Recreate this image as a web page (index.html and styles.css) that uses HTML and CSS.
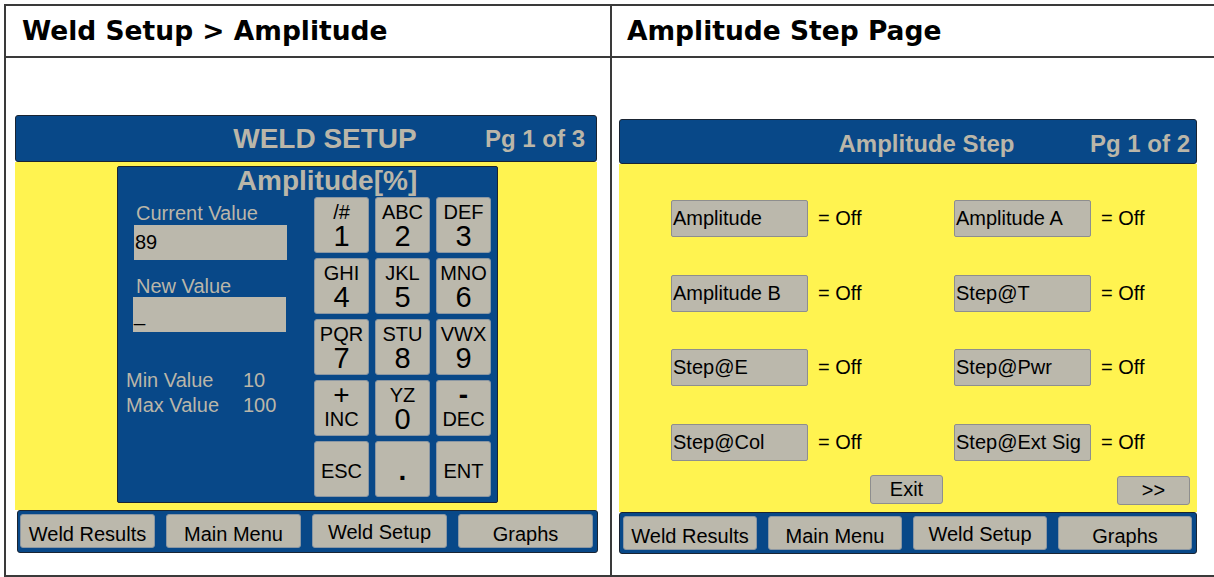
FILE: index.html
```html
<!DOCTYPE html>
<html>
<head>
<meta charset="utf-8">
<link rel="stylesheet" href="styles.css">
</head>
<body>
<div class="sheet">
  <div class="cell head head-left">Weld Setup &gt; Amplitude</div>
  <div class="cell head head-right">Amplitude Step Page</div>

  <div class="cell body body-left">
    <div class="panel panel-left">
      <div class="titlebar tb-left">
        <span class="tb-title tb-title-left">WELD SETUP</span>
        <span class="tb-pg tb-pg-left">Pg 1 of 3</span>
      </div>
      <div class="yellow y-left">
        <div class="dialog">
          <div class="dlg-title">Amplitude[%]</div>
          <div class="dlg-main">
            <div class="dlg-side">
              <div class="lbl">Current Value</div>
              <div class="inp">89</div>
              <div class="lbl lbl2">New Value</div>
              <div class="inp inp2">_</div>
              <div class="limits">
                <span>Min Value</span><span>10</span>
                <span>Max Value</span><span>100</span>
              </div>
            </div>
            <div class="keypad">
              <div class="key"><span class="k-top">/#</span><span class="k-num">1</span></div>
              <div class="key"><span class="k-top">ABC</span><span class="k-num">2</span></div>
              <div class="key"><span class="k-top">DEF</span><span class="k-num">3</span></div>
              <div class="key"><span class="k-top">GHI</span><span class="k-num">4</span></div>
              <div class="key"><span class="k-top">JKL</span><span class="k-num">5</span></div>
              <div class="key"><span class="k-top">MNO</span><span class="k-num">6</span></div>
              <div class="key"><span class="k-top">PQR</span><span class="k-num">7</span></div>
              <div class="key"><span class="k-top">STU</span><span class="k-num">8</span></div>
              <div class="key"><span class="k-top">VWX</span><span class="k-num">9</span></div>
              <div class="key"><span class="k-top k-sym">+</span><span class="k-bot">INC</span></div>
              <div class="key"><span class="k-top">YZ</span><span class="k-num">0</span></div>
              <div class="key"><span class="k-top k-sym k-minus">-</span><span class="k-bot">DEC</span></div>
              <div class="key key-single">ESC</div>
              <div class="key key-single key-dot">.</div>
              <div class="key key-single">ENT</div>
            </div>
          </div>
        </div>
      </div>
      <div class="nav nav-left">
        <div class="nbtn">Weld Results</div>
        <div class="nbtn">Main Menu</div>
        <div class="nbtn nbtn-up">Weld Setup</div>
        <div class="nbtn">Graphs</div>
      </div>
    </div>
  </div>

  <div class="cell body body-right">
    <div class="panel panel-right">
      <div class="titlebar tb-right">
        <span class="tb-title tb-title-right">Amplitude Step</span>
        <span class="tb-pg tb-pg-right">Pg 1 of 2</span>
      </div>
      <div class="yellow y-right">
        <div class="fields">
          <div class="field"><div class="fbox">Amplitude</div><span class="fval">= Off</span></div>
          <div class="field"><div class="fbox">Amplitude A</div><span class="fval">= Off</span></div>
          <div class="field"><div class="fbox">Amplitude B</div><span class="fval">= Off</span></div>
          <div class="field"><div class="fbox">Step@T</div><span class="fval">= Off</span></div>
          <div class="field"><div class="fbox">Step@E</div><span class="fval">= Off</span></div>
          <div class="field"><div class="fbox">Step@Pwr</div><span class="fval">= Off</span></div>
          <div class="field"><div class="fbox">Step@Col</div><span class="fval">= Off</span></div>
          <div class="field"><div class="fbox">Step@Ext Sig</div><span class="fval">= Off</span></div>
        </div>
        <div class="actions">
          <div class="abtn abtn-exit">Exit</div>
          <div class="abtn abtn-next">&gt;&gt;</div>
        </div>
      </div>
      <div class="nav nav-right">
        <div class="nbtn">Weld Results</div>
        <div class="nbtn">Main Menu</div>
        <div class="nbtn nbtn-up">Weld Setup</div>
        <div class="nbtn">Graphs</div>
      </div>
    </div>
  </div>
</div>
</body>
</html>
```

FILE: styles.css
```css
html, body {
  margin: 0;
  padding: 0;
  overflow: hidden;
  background: #ffffff;
}

.sheet {
  margin: 4px 0 0 4px;
  display: grid;
  grid-template-columns: 606px 606px;
  grid-template-rows: 52px 519px;
  border-top: 2px solid #3a3a3a;
  border-left: 2px solid #3a3a3a;
  width: max-content;
}

.cell {
  border-right: 2px solid #3a3a3a;
  border-bottom: 2px solid #3a3a3a;
}

.head {
  font-family: "DejaVu Sans", sans-serif;
  font-weight: bold;
  font-size: 26.5px;
  line-height: 50px;
  color: #000;
}
.head-left { padding-left: 16px; }
.head-right { padding-left: 15px; }

.body-left { padding: 57px 0 0 9px; }
.body-right { padding: 61px 0 0 7px; }

.panel {
  font-family: "Liberation Sans", Arial, sans-serif;
  display: flex;
  flex-direction: column;
}
.panel-left { width: 583px; }
.panel-right { width: 578px; }

.titlebar {
  box-sizing: border-box;
  background: #084888;
  border: 1px solid #1a2432;
  border-radius: 3px;
  display: flex;
  align-items: center;
  color: #bab6a9;
  font-weight: bold;
}
.tb-left { width: 582px; height: 47px; }
.tb-right { width: 578px; height: 45px; padding-top: 4px; }

.tb-title { flex: 1; text-align: center; }
.tb-title-left { font-size: 28px; padding-left: 149px; }
.tb-title-right { font-size: 24px; padding-left: 143px; }
.tb-pg { font-size: 24px; }
.tb-pg-left { margin-right: 11px; }
.tb-pg-right { margin-right: 6px; }

.yellow {
  box-sizing: border-box;
  background: #fff350;
  height: 348px;
}
.y-left {
  width: 582px;
  padding: 4px 0 0 102px;
}
.y-right {
  width: 578px;
  padding-top: 36px;
}

/* dialog */
.dialog {
  box-sizing: border-box;
  width: 381px;
  height: 337px;
  background: #084888;
  border: 1px solid #1a2432;
  border-radius: 2px;
}
.dlg-title {
  height: 30px;
  line-height: 28px;
  font-size: 28px;
  font-weight: bold;
  color: #bab6a9;
  text-align: center;
  padding-left: 39px;
}
.dlg-main { display: flex; }
.dlg-side {
  width: 196px;
  color: #bab6a9;
  font-size: 20px;
}
.lbl {
  line-height: 22px;
  padding-left: 18px;
  margin-top: 5px;
}
.lbl2 { margin-top: 15px; }
.inp {
  box-sizing: border-box;
  margin: 1px 0 0 16px;
  width: 153px;
  height: 35px;
  background: #bbb8ac;
  color: #000;
  line-height: 35px;
  padding-left: 1px;
}
.inp2 { margin: 0 0 0 15px; }
.limits {
  margin-top: 36px;
  padding-left: 8px;
  display: grid;
  grid-template-columns: 117px auto;
  line-height: 25px;
}

.keypad {
  display: grid;
  grid-template-columns: repeat(3, 55px);
  grid-auto-rows: 56px;
  column-gap: 6px;
  row-gap: 5px;
}
.key {
  box-sizing: border-box;
  background: #bbb8ac;
  border: 1px solid #8b97a3;
  border-radius: 3px;
  display: flex;
  flex-direction: column;
  align-items: center;
  padding-top: 4px;
  color: #000;
}
.k-top { font-size: 20px; line-height: 20px; }
.k-num { font-size: 29px; line-height: 29px; }
.k-bot { font-size: 20px; line-height: 28px; }
.k-sym { font-size: 28px; line-height: 20px; }
.k-minus { font-weight: bold; }
.key-single {
  justify-content: center;
  font-size: 20px;
}
.key-dot {
  font-size: 28px;
  font-weight: bold;
}

/* nav */
.nav {
  box-sizing: border-box;
  background: #084888;
  border: 1px solid #1a2432;
  border-radius: 3px;
  display: flex;
  column-gap: 11px;
}
.nav-left {
  width: 581px;
  height: 43px;
  margin-left: 2px;
  padding: 3px 0 0 2px;
}
.nav-right {
  width: 578px;
  height: 42px;
  padding: 3px 0 0 3px;
}
.nbtn {
  box-sizing: border-box;
  height: 34px;
  background: #bbb8ac;
  border: 1px solid #8b97a3;
  border-radius: 3px;
  font-size: 20px;
  color: #000;
  text-align: center;
  line-height: 30px;
  padding-top: 4px;
}
.nav-left .nbtn { width: 135px; }
.nav-right .nbtn { width: 134px; }
.nbtn-up { padding-top: 2px; }

/* fields */
.fields {
  display: grid;
  grid-template-columns: 283px auto;
  grid-auto-rows: 37px;
  row-gap: 37.5px;
  padding-left: 52px;
}
.field {
  display: flex;
  align-items: center;
}
.fbox {
  box-sizing: border-box;
  width: 137px;
  height: 37px;
  background: #bbb8ac;
  border: 1px solid #8e8e8e;
  border-radius: 2px;
  font-size: 20px;
  line-height: 35px;
  padding-left: 1px;
  color: #000;
}
.fval {
  margin-left: 10px;
  font-size: 20px;
  color: #000;
}

.actions {
  margin-top: 14px;
  display: grid;
  grid-template-columns: 1fr auto 1fr;
}
.abtn {
  box-sizing: border-box;
  width: 73px;
  height: 29px;
  background: #bbb8ac;
  border: 1px solid #8e8e8e;
  border-radius: 3px;
  font-size: 20px;
  line-height: 27px;
  text-align: center;
  color: #000;
}
.abtn-exit { grid-column: 2; margin-left: -3px; }
.abtn-next { grid-column: 3; justify-self: end; margin-right: 7px; margin-top: 1px; }
```
